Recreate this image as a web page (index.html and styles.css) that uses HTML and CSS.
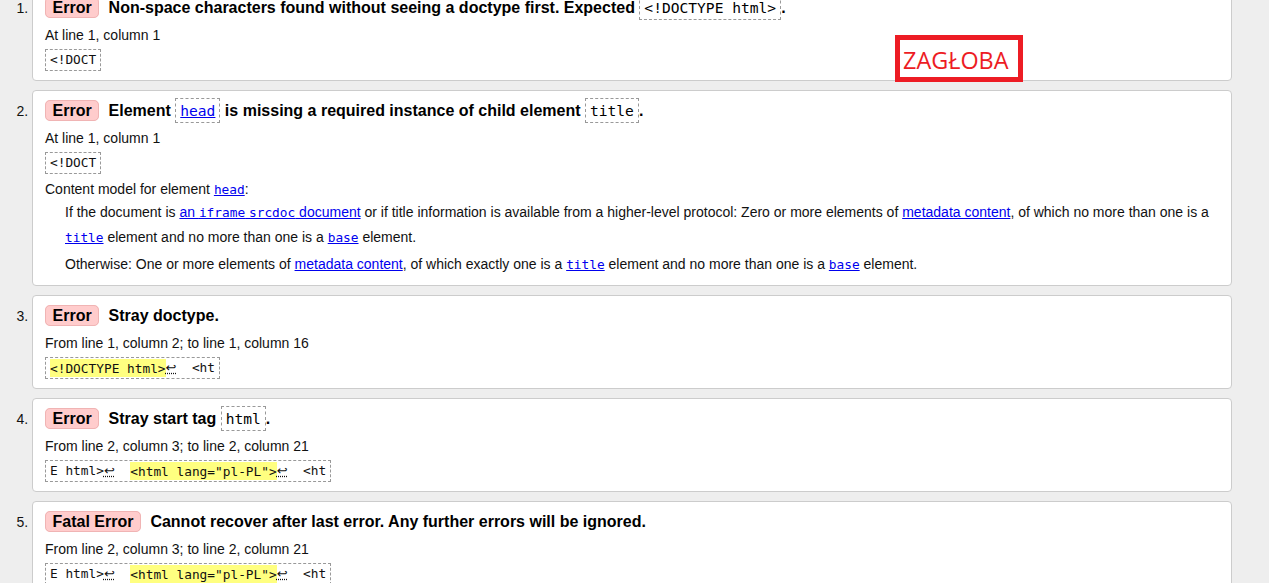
FILE: index.html
```html
<!DOCTYPE html>
<html lang="en">
<head>
<meta charset="utf-8">
<title>Validation results</title>
<link rel="stylesheet" href="styles.css">
</head>
<body>
<ol class="results">
  <li class="msg">
    <p class="msg-title"><strong class="badge">Error</strong> <span>Non-space characters found without seeing a doctype first. Expected <code class="tcode">&lt;!DOCTYPE html&gt;</code>.</span></p>
    <p class="location">At line 1, column 1</p>
    <p class="extract"><code>&lt;!DOCT</code></p>
  </li>
  <li class="msg msg-detailed">
    <p class="msg-title"><strong class="badge">Error</strong> <span>Element <code class="tcode"><a href="#">head</a></code> is missing a required instance of child element <code class="tcode">title</code>.</span></p>
    <p class="location">At line 1, column 1</p>
    <p class="extract"><code>&lt;!DOCT</code></p>
    <p class="info">Content model for element <a href="#"><code>head</code></a>:</p>
    <dl class="model">
      <dd>
        <p>If the document is <a href="#">an <code>iframe</code> <code>srcdoc</code> document</a> or if title information is available from a higher-level protocol: Zero or more elements of <a href="#">metadata content</a>, of which no more than one is a <a href="#"><code>title</code></a> element and no more than one is a <a href="#"><code>base</code></a> element.</p>
        <p>Otherwise: One or more elements of <a href="#">metadata content</a>, of which exactly one is a <a href="#"><code>title</code></a> element and no more than one is a <a href="#"><code>base</code></a> element.</p>
      </dd>
    </dl>
  </li>
  <li class="msg">
    <p class="msg-title"><strong class="badge">Error</strong> <span>Stray doctype.</span></p>
    <p class="location">From line 1, column 2; to line 1, column 16</p>
    <p class="extract"><code><b class="hl">&lt;!DOCTYPE html&gt;</b><abbr title="Line break">↩</abbr>  &lt;ht</code></p>
  </li>
  <li class="msg">
    <p class="msg-title"><strong class="badge">Error</strong> <span>Stray start tag <code class="tcode">html</code>.</span></p>
    <p class="location">From line 2, column 3; to line 2, column 21</p>
    <p class="extract"><code>E html&gt;<abbr title="Line break">↩</abbr>  <b class="hl">&lt;html lang="pl-PL"&gt;</b><abbr title="Line break">↩</abbr>  &lt;ht</code></p>
  </li>
  <li class="msg">
    <p class="msg-title"><strong class="badge">Fatal Error</strong> <span>Cannot recover after last error. Any further errors will be ignored.</span></p>
    <p class="location">From line 2, column 3; to line 2, column 21</p>
    <p class="extract"><code>E html&gt;<abbr title="Line break">↩</abbr>  <b class="hl">&lt;html lang="pl-PL"&gt;</b><abbr title="Line break">↩</abbr>  &lt;ht</code></p>
  </li>
</ol>
<div class="stamp">ZAGŁOBA</div>
</body>
</html>
```

FILE: styles.css
```css
html {
  background: #eeeeee;
}

body {
  margin: 0;
  font-family: "Liberation Sans", Arial, sans-serif;
  font-size: 14px;
  color: #111;
  overflow: hidden;
}

a {
  color: #0000ee;
}

.results {
  margin: -13px 37px 0 0;
  padding: 0 0 0 32px;
}

.msg {
  background: #fff;
  border: 1px solid #cccccc;
  border-radius: 4px;
  padding: 7px 12px 9px 12px;
  margin-bottom: 9px;
}

.msg.msg-detailed {
  padding-bottom: 8px;
}

.msg p {
  margin: 0;
}

.msg .msg-title {
  font-size: 16px;
  font-weight: bold;
  line-height: 25px;
  color: #000;
}

.badge {
  background: #ffcccc;
  border: 1px solid #f0b4b4;
  border-radius: 5px;
  padding: 1px 6.5px;
  margin-right: 5px;
  line-height: 1;
}

.tcode {
  font-family: "DejaVu Sans Mono", "Liberation Mono", monospace;
  font-size: 14.6px;
  font-weight: normal;
  line-height: 1;
  border: 1px dashed #999;
  padding: 3px 4px;
}

.msg .location {
  margin-top: 5px;
  line-height: 20px;
}

.msg .extract {
  margin-top: 4px;
  display: flex;
  align-items: flex-start;
}

.extract code {
  font-family: "DejaVu Sans Mono", "Liberation Mono", monospace;
  font-size: 12.8px;
  line-height: 18px;
  height: 18px;
  padding: 1px 4px;
  border: 1px dashed #999;
  white-space: pre;
  color: #111;
}

.hl {
  font-weight: normal;
  background: #ffff80;
  padding: 1.5px 0;
}

abbr {
  font-family: "DejaVu Sans", sans-serif;
  font-size: 13px;
  line-height: 1;
  text-decoration: underline dotted;
}

.msg .info {
  margin-top: 5px;
  line-height: 20px;
}

.info code,
.model code {
  font-family: "DejaVu Sans Mono", "Liberation Mono", monospace;
  font-size: 12.8px;
  line-height: 1;
}

.model {
  margin: 0;
}

.model dd {
  margin: 1px 0 0 20px;
}

.model p {
  line-height: 25px;
}

.msg .model p + p {
  margin-top: 2px;
}

.stamp {
  position: absolute;
  top: 35px;
  left: 895px;
  width: 115px;
  height: 34px;
  padding: 3px 0 0 3px;
  border: 5px solid #ed1c24;
  background: #fff;
  color: #ed1c24;
  font-family: "Open Sans", "Noto Sans", sans-serif;
  font-size: 23.4px;
  line-height: 34px;
}
```
